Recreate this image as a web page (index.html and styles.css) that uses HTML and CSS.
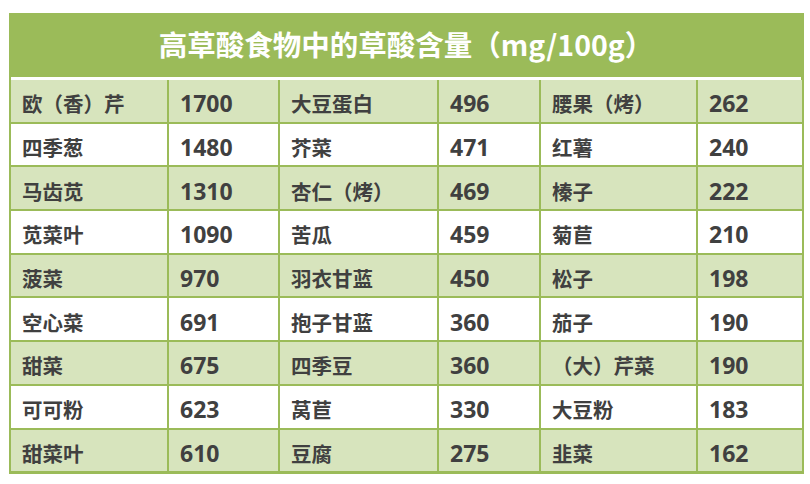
FILE: index.html
```html
<!DOCTYPE html>
<html lang="zh-CN">
<head>
<meta charset="utf-8">
<title>高草酸食物中的草酸含量</title>
<link rel="stylesheet" href="styles.css">
</head>
<body>
<div class="table">
  <div class="title">高草酸食物中的草酸含量（mg/100g）</div>
  <div class="grid">
    <div class="c a">欧（香）芹</div><div class="c a n">1700</div><div class="c a">大豆蛋白</div><div class="c a n">496</div><div class="c a">腰果（烤）</div><div class="c a n">262</div>
    <div class="c">四季葱</div><div class="c n">1480</div><div class="c">芥菜</div><div class="c n">471</div><div class="c">红薯</div><div class="c n">240</div>
    <div class="c a">马齿苋</div><div class="c a n">1310</div><div class="c a">杏仁（烤）</div><div class="c a n">469</div><div class="c a">榛子</div><div class="c a n">222</div>
    <div class="c">苋菜叶</div><div class="c n">1090</div><div class="c">苦瓜</div><div class="c n">459</div><div class="c">菊苣</div><div class="c n">210</div>
    <div class="c a">菠菜</div><div class="c a n">970</div><div class="c a">羽衣甘蓝</div><div class="c a n">450</div><div class="c a">松子</div><div class="c a n">198</div>
    <div class="c">空心菜</div><div class="c n">691</div><div class="c">抱子甘蓝</div><div class="c n">360</div><div class="c">茄子</div><div class="c n">190</div>
    <div class="c a">甜菜</div><div class="c a n">675</div><div class="c a">四季豆</div><div class="c a n">360</div><div class="c a">（大）芹菜</div><div class="c a n">190</div>
    <div class="c">可可粉</div><div class="c n">623</div><div class="c">莴苣</div><div class="c n">330</div><div class="c">大豆粉</div><div class="c n">183</div>
    <div class="c a">甜菜叶</div><div class="c a n">610</div><div class="c a">豆腐</div><div class="c a n">275</div><div class="c a">韭菜</div><div class="c a n">162</div>
  </div>
</div>
</body>
</html>
```
FILE: styles.css
```css
html, body {
  margin: 0;
  padding: 0;
  background: #ffffff;
}
body {
  padding: 13px 0 0 9px;
  font-family: "Noto Sans CJK SC", "Noto Sans", sans-serif;
}
.table {
  width: 790px;
  border-style: solid;
  border-color: #9bbb59;
  border-width: 0 3px 3px 2px;
  background: #9bbb59;
}
.title {
  height: 67px;
  box-sizing: border-box;
  border-bottom: 3px solid #ffffff;
  background: #9bbb59;
  color: #ffffff;
  font-weight: 700;
  font-size: 28.5px;
  display: flex;
  align-items: center;
  justify-content: center;
  padding-bottom: 3px;
}
.grid {
  display: grid;
  grid-template-columns: 156px 109px 157px 100px 155px 104px;
  grid-auto-rows: 41.7px;
  column-gap: 2px;
  row-gap: 2px;
  background: #9bbb59;
}
.c {
  background: #ffffff;
  color: #404040;
  font-weight: 700;
  font-size: 20.5px;
  display: flex;
  align-items: center;
  padding: 5px 0 0 11px;
  box-sizing: border-box;
  white-space: nowrap;
}
.c.a {
  background: #d7e4bd;
}
.n {
  font-family: "Open Sans", "Noto Sans", sans-serif;
  font-size: 23px;
}
```
